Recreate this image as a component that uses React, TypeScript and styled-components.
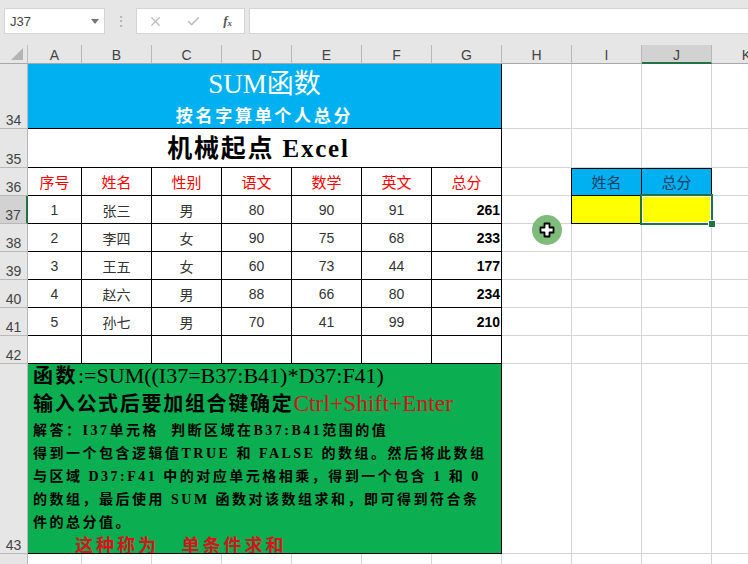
import React from "react";
import styled, { createGlobalStyle } from "styled-components";
import { Check, X } from "lucide-react";

const COLS = ["A", "B", "C", "D", "E", "F", "G", "H", "I", "J", "K"];
const HEADS = ["序号", "姓名", "性别", "语文", "数学", "英文", "总分"];
const ROWS = [
  ["1", "张三", "男", "80", "90", "91", "261"],
  ["2", "李四", "女", "90", "75", "68", "233"],
  ["3", "王五", "女", "60", "73", "44", "177"],
  ["4", "赵六", "男", "88", "66", "80", "234"],
  ["5", "孙七", "男", "70", "41", "99", "210"],
  ["", "", "", "", "", "", ""],
];

const App = () => {
  return (
    <>
      <GlobalStyle />
      <Page>
        <FormulaBar>
          <NameBox>
            J37
            <svg width="8" height="5" viewBox="0 0 8 5">
              <path d="M0 0H8L4 5Z" fill="#777" />
            </svg>
          </NameBox>
          <Dots>⋮</Dots>
          <ButtonBox>
            <X size={15} color="#bdbdbd" strokeWidth={2} />
            <Check size={15} color="#bdbdbd" strokeWidth={2.4} />
            <Fx>
              f<sub>x</sub>
            </Fx>
          </ButtonBox>
          <FormulaInput />
        </FormulaBar>

        <Sheet>
          <Corner>
            <svg width="14" height="14" viewBox="0 0 14 14">
              <path d="M13 1V13H1Z" fill="#b4b4b4" />
            </svg>
          </Corner>
          {COLS.map((c) => (
            <ColHead key={c} $active={c === "J"}>
              {c}
            </ColHead>
          ))}

          <RowHead>34</RowHead>
          <TitleCell $span={7}>
            <BigTitle>SUM函数</BigTitle>
            <SubTitle>按名字算单个人总分</SubTitle>
          </TitleCell>
          <EmptyCells n={4} />

          <RowHead>35</RowHead>
          <BrandCell $span={7}>机械起点 Excel</BrandCell>
          <EmptyCells n={4} />

          <RowHead>36</RowHead>
          {HEADS.map((h) => (
            <HeadCell key={h}>{h}</HeadCell>
          ))}
          <Blank />
          <LookupHead>姓名</LookupHead>
          <LookupHead>总分</LookupHead>
          <Blank />

          {ROWS.map((row, i) => (
            <React.Fragment key={i}>
              <RowHead $active={i === 0}>{37 + i}</RowHead>
              {row.map((v, j) => (
                <DataCell key={j} $total={j === 6}>
                  {v}
                </DataCell>
              ))}
              <Blank />
              {i === 0 ? (
                <>
                  <InputCell />
                  <InputCell>
                    <Selection>
                      <Handle />
                    </Selection>
                  </InputCell>
                </>
              ) : (
                <EmptyCells n={2} />
              )}
              <Blank />
            </React.Fragment>
          ))}

          <RowHead>43</RowHead>
          <NoteCell $span={7}>
            <FormulaLine>
              <FormulaLabel>函数</FormulaLabel>:=SUM((I37=B37:B41)*D37:F41)
            </FormulaLine>
            <ShortcutLine>
              输入公式后要加组合键确定<RedText>Ctrl+Shift+Enter</RedText>
            </ShortcutLine>
            <BodyLine $top={8}>解答：I37单元格&nbsp;&nbsp;判断区域在B37:B41范围的值</BodyLine>
            <BodyLine>得到一个包含逻辑值TRUE 和 FALSE 的数组。然后将此数组</BodyLine>
            <BodyLine>与区域 D37:F41 中的对应单元格相乘，得到一个包含 1 和 0</BodyLine>
            <BodyLine>的数组，最后使用 SUM 函数对该数组求和，即可得到符合条</BodyLine>
            <BodyLine>件的总分值。</BodyLine>
            <Footnote>这种称为&nbsp;&nbsp;&nbsp;单条件求和</Footnote>
          </NoteCell>
          <EmptyCells n={4} />

          <RowHead />
          <EmptyCells n={11} />
        </Sheet>

        <Cursor>
          <svg width="16" height="16" viewBox="0 0 16 16">
            <path
              d="M5.5 1.5h5v4h4v5h-4v4h-5v-4h-4v-5h4z"
              fill="#fff"
              stroke="#000"
              strokeWidth="1.8"
              strokeLinejoin="round"
            />
          </svg>
        </Cursor>
      </Page>
    </>
  );
};

const EmptyCells = ({ n }: { n: number }) => (
  <>
    {Array.from({ length: n }).map((_, i) => (
      <Blank key={i} />
    ))}
  </>
);

export default App;

const SERIF = `"Liberation Serif", "Noto Sans CJK SC", serif`;
const SANS = `"Liberation Sans", "Noto Sans CJK SC", sans-serif`;

const GlobalStyle = createGlobalStyle`
  html, body {
    margin: 0;
    padding: 0;
    background: #e6e6e6;
  }
  * {
    box-sizing: border-box;
  }
`;

const Page = styled.div`
  position: relative;
  width: 748px;
  height: 564px;
  overflow: hidden;
  background: #e6e6e6;
  font-family: ${SANS};
`;

const FormulaBar = styled.div`
  display: flex;
  align-items: stretch;
  height: 45px;
  padding: 8px 0 11px 4px;
`;

const NameBox = styled.div`
  display: flex;
  align-items: center;
  justify-content: space-between;
  width: 101px;
  padding: 0 5px 0 5px;
  background: #fff;
  border: 1px solid #d4d4d4;
  font-size: 13px;
  color: #444;
`;

const Dots = styled.div`
  width: 31px;
  text-align: center;
  line-height: 26px;
  font-size: 14px;
  color: #a8a8a8;
`;

const ButtonBox = styled.div`
  display: flex;
  align-items: center;
  justify-content: space-between;
  width: 109px;
  padding: 0 12px 0 11px;
  background: #fff;
  border: 1px solid #d4d4d4;
`;

const Fx = styled.span`
  font-family: "Liberation Serif", serif;
  font-style: italic;
  font-weight: bold;
  font-size: 13px;
  color: #555;

  sub {
    font-size: 9px;
    vertical-align: -1px;
  }
`;

const FormulaInput = styled.div`
  flex: 1;
  margin-left: 4px;
  background: #fff;
  border: 1px solid #d4d4d4;
  border-right: none;
`;

const Sheet = styled.div`
  display: grid;
  grid-template-columns: 28px 54px repeat(10, 70px);
  grid-template-rows: 19px 65px 39px 28px repeat(6, 28px) 190px 28px;
`;

const Corner = styled.div`
  display: flex;
  align-items: flex-end;
  justify-content: flex-end;
  padding: 0 3px 2px 0;
  background: #e6e6e6;
  border-right: 1px solid #bdbdbd;
  border-bottom: 1px solid #a8a8a8;
`;

const ColHead = styled.div<{ $active?: boolean }>`
  display: flex;
  align-items: center;
  justify-content: center;
  padding-top: 2px;
  font-size: 14px;
  color: #444;
  background: ${(p) => (p.$active ? "#d2d2d2" : "#e6e6e6")};
  border-right: 1px solid #b8b8b8;
  border-bottom: ${(p) => (p.$active ? "2px solid #217346" : "1px solid #a8a8a8")};
`;

const RowHead = styled.div<{ $active?: boolean }>`
  display: flex;
  align-items: flex-end;
  justify-content: center;
  font-size: 14px;
  line-height: 16px;
  color: #444;
  background: ${(p) => (p.$active ? "#d2d2d2" : "#e6e6e6")};
  border-right: ${(p) => (p.$active ? "2px solid #217346" : "1px solid #b8b8b8")};
  border-bottom: 1px solid #b8b8b8;
`;

const Blank = styled.div`
  background: #fff;
  border-right: 1px solid #d4d4d4;
  border-bottom: 1px solid #d4d4d4;
`;

const TableCell = styled.div<{ $span?: number }>`
  grid-column: span ${(p) => p.$span ?? 1};
  border-right: 1px solid #000;
  border-bottom: 1px solid #000;
`;

const TitleCell = styled(TableCell)`
  display: flex;
  flex-direction: column;
  align-items: center;
  background: #00b0f0;
  color: #fff;
  font-family: ${SERIF};
`;

const BigTitle = styled.div`
  margin-top: 5px;
  font-size: 27px;
  line-height: 30px;
`;

const SubTitle = styled.div`
  margin-top: 7px;
  font-size: 17px;
  line-height: 22px;
  font-weight: bold;
  letter-spacing: 2.7px;
`;

const BrandCell = styled(TableCell)`
  display: flex;
  align-items: center;
  justify-content: center;
  padding: 0 12px 4px 0;
  background: #fff;
  color: #000;
  font-family: ${SERIF};
  font-size: 25px;
  font-weight: bold;
  letter-spacing: 1.8px;
`;

const HeadCell = styled(TableCell)`
  display: flex;
  align-items: center;
  justify-content: center;
  padding-bottom: 1px;
  background: #fff;
  color: #f00;
  font-size: 15px;
`;

const DataCell = styled(TableCell)<{ $total?: boolean }>`
  display: flex;
  align-items: center;
  justify-content: ${(p) => (p.$total ? "flex-end" : "center")};
  padding-right: ${(p) => (p.$total ? "1px" : "0")};
  background: #fff;
  color: ${(p) => (p.$total ? "#000" : "#333")};
  font-size: 14px;
  font-weight: ${(p) => (p.$total ? "bold" : "normal")};
`;

const LookupHead = styled(HeadCell)`
  background: #00b0f0;
  color: #1f3f66;
  border-top: 1px solid #000;
  border-left: 1px solid #000;
  margin-left: -1px;
`;

const InputCell = styled(TableCell)`
  position: relative;
  background: #ff0;
  border-left: 1px solid #000;
  margin-left: -1px;
`;

const Selection = styled.div`
  position: absolute;
  inset: -2px;
  border: 2px solid #217346;
  box-shadow: inset 0 0 0 1px #fff;
  z-index: 2;
`;

const Handle = styled.div`
  position: absolute;
  right: -4px;
  bottom: -4px;
  width: 6px;
  height: 6px;
  background: #217346;
  outline: 1px solid #fff;
`;

const NoteCell = styled(TableCell)`
  display: flex;
  flex-direction: column;
  padding: 2px 0 0 5px;
  overflow: hidden;
  background: #0bae50;
  color: #000;
  font-family: ${SERIF};
`;

const FormulaLine = styled.div`
  font-size: 22px;
  line-height: 20px;
  white-space: nowrap;
`;

const FormulaLabel = styled.span`
  font-size: 20px;
  font-weight: bold;
  letter-spacing: 2.5px;
`;

const ShortcutLine = styled.div`
  margin-top: 6px;
  font-size: 20px;
  line-height: 22px;
  letter-spacing: 1.7px;
  font-weight: bold;
  white-space: nowrap;
`;

const RedText = styled.span`
  color: #d5151d;
  font-size: 23.5px;
  font-weight: normal;
  letter-spacing: 0;
`;

const BodyLine = styled.div<{ $top?: number }>`
  margin-top: ${(p) => p.$top ?? 7}px;
  font-size: 14px;
  line-height: 16px;
  font-weight: bold;
  letter-spacing: 2.5px;
  white-space: nowrap;
`;

const Footnote = styled.div`
  margin: 7px 0 0 42px;
  font-size: 18px;
  line-height: 16px;
  font-weight: bold;
  letter-spacing: 3px;
  color: #d5151d;
  white-space: nowrap;
`;

const Cursor = styled.div`
  position: absolute;
  left: 532px;
  top: 215px;
  display: flex;
  align-items: center;
  justify-content: center;
  width: 30px;
  height: 30px;
  border-radius: 50%;
  background: #7fbb7b;
  z-index: 3;
`;
